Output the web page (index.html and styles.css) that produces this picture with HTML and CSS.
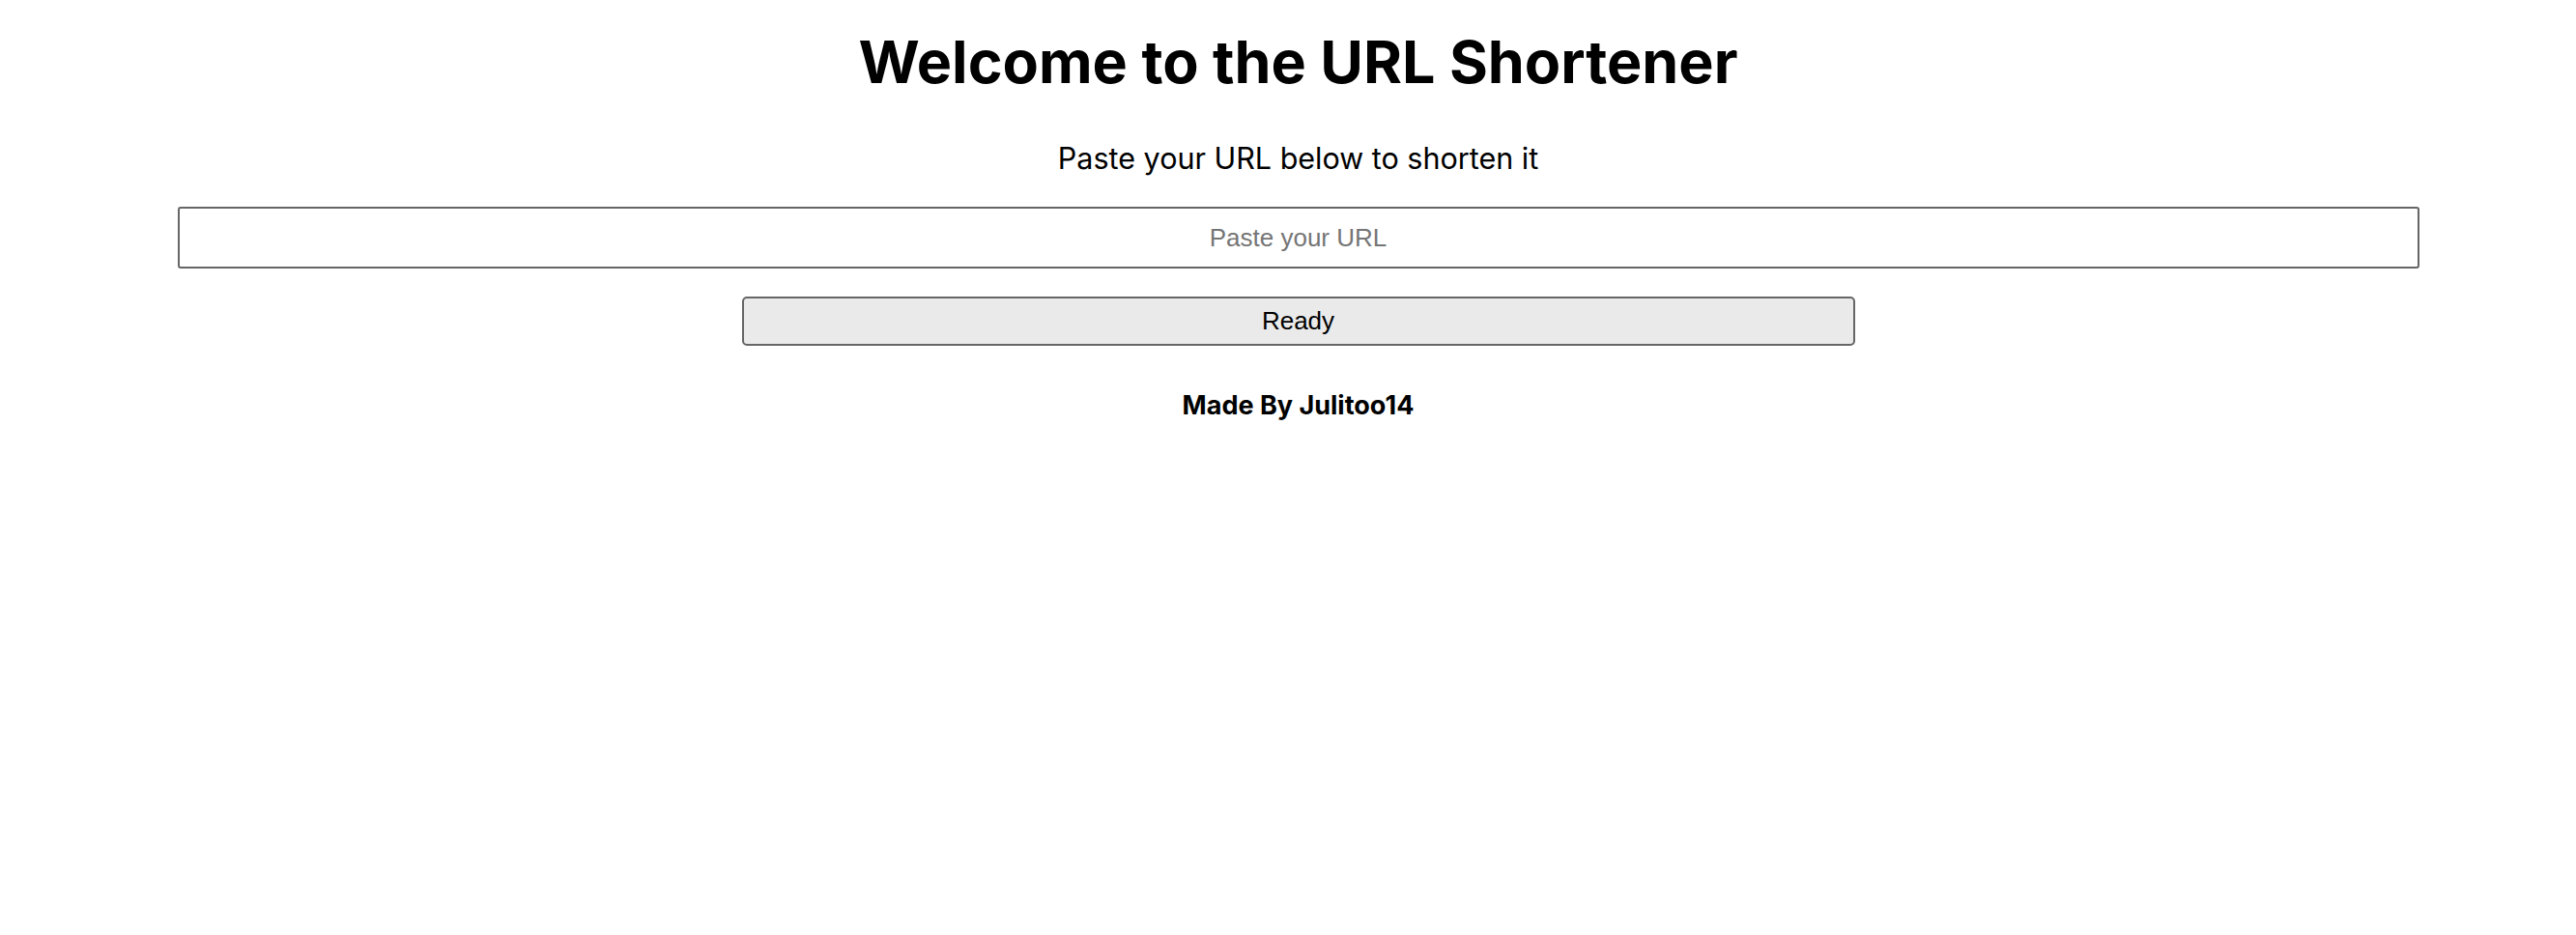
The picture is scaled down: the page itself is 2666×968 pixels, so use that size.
FILE: index.html
```html
<!DOCTYPE html>
<html lang="en">
<head>
<meta charset="utf-8">
<title>URL Shortener</title>
<link rel="stylesheet" href="styles.css">
</head>
<body>
<main class="page">
  <h1 class="title">Welcome to the URL Shortener</h1>
  <p class="subtitle">Paste your URL below to shorten it</p>
  <form class="form">
    <input class="url-input" type="text" placeholder="Paste your URL">
    <button class="ready-btn" type="button">Ready</button>
  </form>
  <p class="credit">Made By Julitoo14</p>
</main>
</body>
</html>
```

FILE: styles.css
```css
html, body {
  margin: 0;
  padding: 0;
  background: #ffffff;
}

body {
  font-family: Inter, "Noto Sans", sans-serif;
  color: #000;
}

.page {
  display: flex;
  flex-direction: column;
  align-items: center;
  padding: 28px 0 0 21px;
}

.title {
  margin: 0;
  font-size: 61px;
  line-height: 72px;
  font-weight: 700;
}

.subtitle {
  margin: 46px 0 0;
  font-size: 30.5px;
  line-height: 36px;
  font-weight: 400;
}

.form {
  display: flex;
  flex-direction: column;
  align-items: center;
  margin-top: 32px;
}

.url-input {
  box-sizing: border-box;
  width: 2320px;
  height: 64px;
  border: 2px solid #666;
  border-radius: 3px;
  background: #fff;
  font-family: "Liberation Sans", Arial, sans-serif;
  font-size: 26px;
  text-align: center;
  padding: 0 8px;
  outline: none;
}

.url-input::placeholder {
  color: #757575;
}

.ready-btn {
  box-sizing: border-box;
  margin-top: 29px;
  width: 1152px;
  height: 51px;
  border: 2px solid #666;
  border-radius: 5px;
  background: #eaeaea;
  font-family: "Liberation Sans", Arial, sans-serif;
  font-size: 26px;
  color: #000;
  padding: 0;
}

.credit {
  margin: 46px 0 0;
  font-size: 27px;
  line-height: 32px;
  font-weight: 700;
}
```
